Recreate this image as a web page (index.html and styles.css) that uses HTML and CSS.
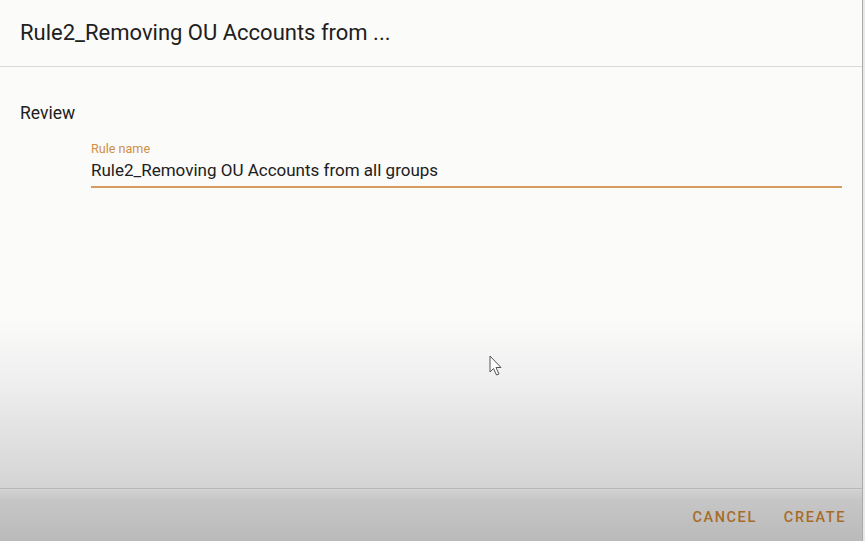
FILE: index.html
```html
<!DOCTYPE html>
<html>
<head>
<meta charset="utf-8">
<link rel="stylesheet" href="styles.css">
</head>
<body>
<div class="dialog">
  <div class="header"><h1 class="title">Rule2_Removing OU Accounts from ...</h1></div>
  <div class="content">
    <div class="section">Review</div>
    <div class="field">
      <div class="label">Rule name</div>
      <div class="value">Rule2_Removing OU Accounts from all groups</div>
    </div>
  </div>
  <div class="footer">
    <button class="btn">CANCEL</button>
    <button class="btn">CREATE</button>
  </div>
  <svg class="cursor" width="14" height="22" viewBox="0 0 14 22">
    <path d="M1 1 L1 17 L4.5 13.5 L7.5 20 L10 19 L7 12.5 L12 12.5 Z" fill="#fdfdfd" stroke="#555" stroke-width="1" stroke-linejoin="round"/>
  </svg>
</div>
</body>
</html>
```
FILE: styles.css
```css
html, body {
  margin: 0;
  padding: 0;
  width: 865px;
  height: 541px;
  overflow: hidden;
  background: #e9e9e9;
  font-family: Roboto, "Liberation Sans", sans-serif;
}
.dialog {
  position: relative;
  width: 862px;
  height: 541px;
  border-right: 1px solid #a9a9a9;
  display: flex;
  flex-direction: column;
  background: linear-gradient(to bottom, #fbfbfa 0, #fbfbfa 318px, #efefef 380px, #d4d4d4 488px, #c6c6c6 500px, #bababa 541px);
}
.header {
  height: 67px;
  box-sizing: border-box;
  border-bottom: 1px solid #d9d9d9;
  display: flex;
  align-items: center;
  padding-left: 20px;
}
.title {
  margin: 0;
  font-size: 22px;
  font-weight: 400;
  color: #202020;
  padding-bottom: 1px;
}
.content {
  flex: 1;
  padding: 35px 20px 0 20px;
}
.section {
  font-size: 17.5px;
  color: #202020;
  line-height: 22px;
}
.field {
  margin-left: 71px;
  margin-right: 0;
  margin-top: 18px;
  border-bottom: 2px solid #d69c5e;
  padding-bottom: 5px;
}
.label {
  font-size: 12.6px;
  color: #d08f45;
  line-height: 14px;
}
.value {
  font-size: 17px;
  color: #202020;
  line-height: 22px;
  margin-top: 3px;
}
.footer {
  height: 53px;
  box-sizing: border-box;
  border-top: 1px solid #b7b7b7;
  box-shadow: inset 0 1px 0 #d6d6d6;
  display: flex;
  justify-content: flex-end;
  align-items: center;
  gap: 11px;
  padding: 4px 8px 0 0;
}
.btn {
  background: none;
  border: none;
  padding: 0 8px;
  font-family: Roboto, "Liberation Sans", sans-serif;
  font-size: 14.5px;
  font-weight: 500;
  letter-spacing: 1.6px;
  color: #a86c28;
}
.cursor {
  position: absolute;
  left: 489px;
  top: 355px;
}
```
